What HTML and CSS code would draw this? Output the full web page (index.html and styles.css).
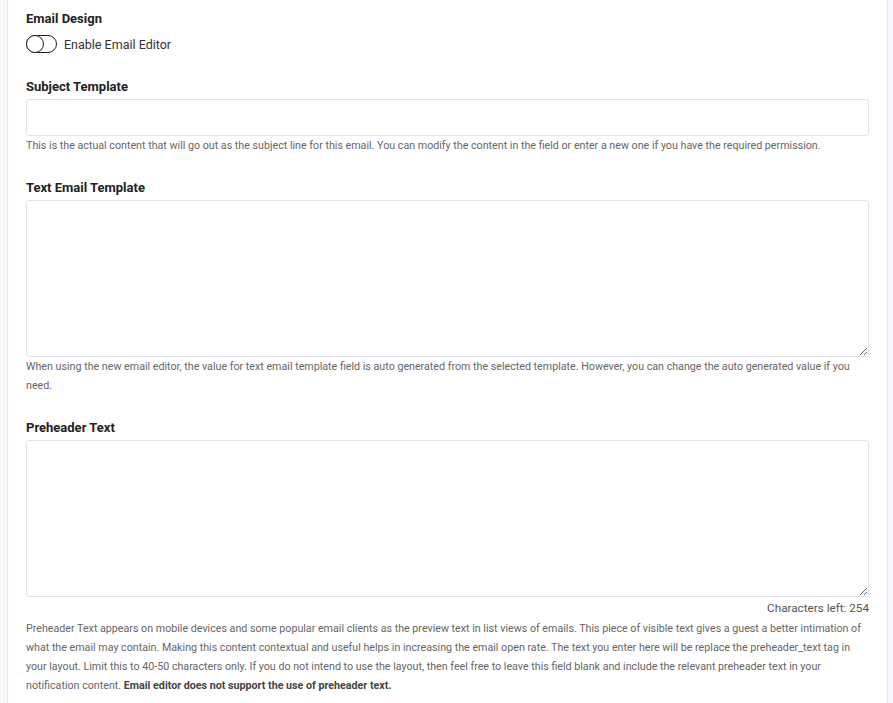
FILE: index.html
```html
<!DOCTYPE html>
<html>
<head>
<meta charset="utf-8">
<link rel="stylesheet" href="styles.css">
</head>
<body>
<div class="shell">
  <div class="panel">
    <section class="field first">
      <div class="label">Email Design</div>
      <label class="toggle-row">
        <span class="toggle"><span class="knob"></span></span>
        <span class="toggle-text">Enable Email Editor</span>
      </label>
    </section>

    <section class="field">
      <div class="label">Subject Template</div>
      <input class="input" type="text">
      <p class="help">This is the actual content that will go out as the subject line for this email. You can modify the content in the field or enter a new one if you have the required permission.</p>
    </section>

    <section class="field">
      <div class="label">Text Email Template</div>
      <textarea class="textarea"></textarea>
      <p class="help">When using the new email editor, the value for text email template field is auto generated from the selected template. However, you can change the auto generated value if you need.</p>
    </section>

    <section class="field">
      <div class="label">Preheader Text</div>
      <textarea class="textarea"></textarea>
      <div class="counter">Characters left: 254</div>
      <p class="help">Preheader Text appears on mobile devices and some popular email clients as the preview text in list views of emails. This piece of visible text gives a guest a better intimation of what the email may contain. Making this content contextual and useful helps in increasing the email open rate. The text you enter here will be replace the preheader_text tag in your layout. Limit this to 40-50 characters only. If you do not intend to use the layout, then feel free to leave this field blank and include the relevant preheader text in your notification content. <strong>Email editor does not support the use of preheader text.</strong></p>
    </section>
  </div>
</div>
</body>
</html>
```

FILE: styles.css
```css
* { box-sizing: border-box; }
html, body { margin: 0; padding: 0; }
body {
  background: #f7f8fc;
  font-family: Roboto, "Liberation Sans", Arial, sans-serif;
  color: #222;
}
.shell {
  padding: 0 5px 0 7px;
  height: 703px;
  overflow: hidden;
}
.panel {
  background: #fff;
  border-left: 1px solid #e6e6f2;
  border-right: 1px solid #e6e6f2;
  padding: 11px 18px 20px 18px;
  min-height: 703px;
}
.field { margin-top: 25px; }
.field.first { margin-top: 0; padding-bottom: 1px; }
.label {
  font-size: 13px;
  font-weight: 700;
  color: #222;
  line-height: 16px;
  margin-bottom: 4px;
}
.toggle-row {
  display: flex;
  align-items: center;
  gap: 7px;
  margin-top: 8px;
}
.toggle {
  width: 31px;
  height: 18px;
  border: 1px solid #222;
  border-radius: 9px;
  display: flex;
  align-items: center;
  padding: 0;
}
.knob {
  width: 18px;
  height: 18px;
  border: 1px solid #222;
  border-radius: 50%;
  margin-left: -1px;
  background: #fff;
}
.toggle-text {
  font-size: 12.5px;
  color: #333;
}
.input {
  display: block;
  width: 100%;
  height: 37px;
  border: 1px solid #e4e4f0;
  border-radius: 3px;
  margin: 0;
  font: inherit;
}
.textarea {
  display: block;
  width: 100%;
  height: 157px;
  border: 1px solid #e4e4f0;
  border-radius: 3px;
  margin: 0;
  font: inherit;
  resize: vertical;
}
.help {
  font-size: 10.7px;
  line-height: 19px;
  color: #666;
  margin: 0;
  padding-top: 0;
}
.counter {
  text-align: right;
  font-size: 11.7px;
  color: #555;
  line-height: 22px;
}
.help strong { color: #444; }
```
